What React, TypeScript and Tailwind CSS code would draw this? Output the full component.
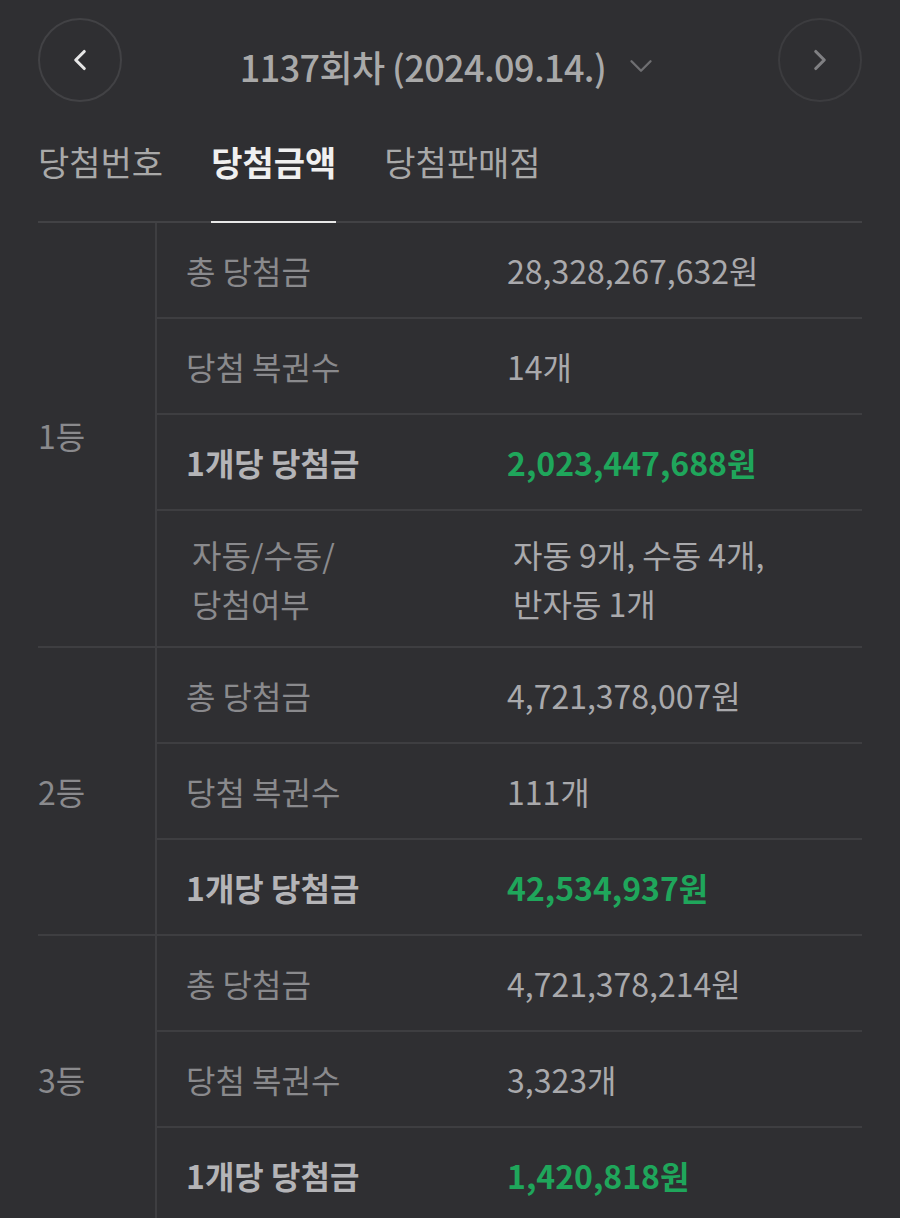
import { ChevronDown, ChevronLeft, ChevronRight } from 'lucide-react';

type Row = { label: React.ReactNode; value: React.ReactNode; strong?: boolean; tall?: boolean };

const groups: { rank: string; rows: Row[] }[] = [
  {
    rank: '1등',
    rows: [
      { label: '총 당첨금', value: '28,328,267,632원' },
      { label: '당첨 복권수', value: '14개' },
      { label: '1개당 당첨금', value: '2,023,447,688원', strong: true },
      {
        label: (
          <>
            자동/수동/
            <br />
            당첨여부
          </>
        ),
        value: (
          <>
            자동 9개, 수동 4개,
            <br />
            반자동 1개
          </>
        ),
        tall: true,
      },
    ],
  },
  {
    rank: '2등',
    rows: [
      { label: '총 당첨금', value: '4,721,378,007원' },
      { label: '당첨 복권수', value: '111개' },
      { label: '1개당 당첨금', value: '42,534,937원', strong: true },
    ],
  },
  {
    rank: '3등',
    rows: [
      { label: '총 당첨금', value: '4,721,378,214원' },
      { label: '당첨 복권수', value: '3,323개' },
      { label: '1개당 당첨금', value: '1,420,818원', strong: true },
    ],
  },
];

const tabs = ['당첨번호', '당첨금액', '당첨판매점'];

export default function App() {
  return (
    <div
      className="h-[1218px] overflow-hidden bg-[#2f2f32] px-[38px]"
      style={{ fontFamily: '"Noto Sans CJK KR", "Noto Sans", sans-serif' }}
    >
      {/* round selector */}
      <div className="flex items-center justify-between pt-[18px]">
        <button className="flex h-[84px] w-[84px] items-center justify-center rounded-full border-2 border-[#424245]">
          <ChevronLeft className="h-[34px] w-[34px] text-[#e6e6e6]" strokeWidth={2.2} />
        </button>
        <div className="flex items-center gap-[16px] pt-[12px]">
          <span className="text-[36px] font-medium leading-[44px] tracking-[-0.6px] text-[#a9a9a9]">
            1137회차 (2024.09.14.)
          </span>
          <ChevronDown className="h-[38px] w-[38px] text-[#6f6f72]" strokeWidth={1.5} />
        </div>
        <button className="flex h-[84px] w-[84px] items-center justify-center rounded-full border-2 border-[#3c3c3f]">
          <ChevronRight className="h-[34px] w-[34px] text-[#808083]" strokeWidth={2.2} />
        </button>
      </div>

      {/* tabs */}
      <div className="mt-[30px] flex gap-[48px] border-b-2 border-[#424245]">
        {tabs.map((t, i) => (
          <div
            key={t}
            className={`-mb-[2px] pb-[39px] pt-[10px] text-[34px] leading-[40px] ${
              i === 1 ? 'border-b-2 border-[#e8e8e8] font-bold text-[#f0f0f0]' : 'border-b-2 border-transparent text-[#a9a9a9]'
            }`}
          >
            {t}
          </div>
        ))}
      </div>

      {/* prize table */}
      <div>
        {groups.map((g) => (
          <div key={g.rank} className="flex border-b-2 border-[#3e3e41]">
            <div className="flex w-[119px] shrink-0 items-center border-r-2 border-[#3e3e41] text-[32px] text-[#8a8a8d]">
              {g.rank}
            </div>
            <div className="flex-1">
              {g.rows.map((r, i) => {
                const last = i === g.rows.length - 1;
                return (
                  <div
                    key={i}
                    className={`flex items-center ${last ? '' : 'border-b-2 border-[#3e3e41]'} ${
                      r.tall ? 'h-[135px]' : last ? 'h-[94px]' : 'h-[96px]'
                    }`}
                  >
                    <div
                      className={`w-[320px] shrink-0 text-[32px] ${r.tall ? 'pl-[35px] leading-[49px]' : 'pl-[29px]'} ${
                        r.strong ? 'font-bold text-[#b4b4b7]' : 'text-[#8a8a8d]'
                      }`}
                    >
                      {r.label}
                    </div>
                    <div
                      className={`text-[32px] ${r.tall ? 'pl-[36px] leading-[49px]' : 'pl-[30px]'} ${
                        r.strong ? 'font-bold text-[#1fa65b]' : 'text-[#a9a9ac]'
                      }`}
                    >
                      {r.value}
                    </div>
                  </div>
                );
              })}
            </div>
          </div>
        ))}
      </div>
    </div>
  );
}
